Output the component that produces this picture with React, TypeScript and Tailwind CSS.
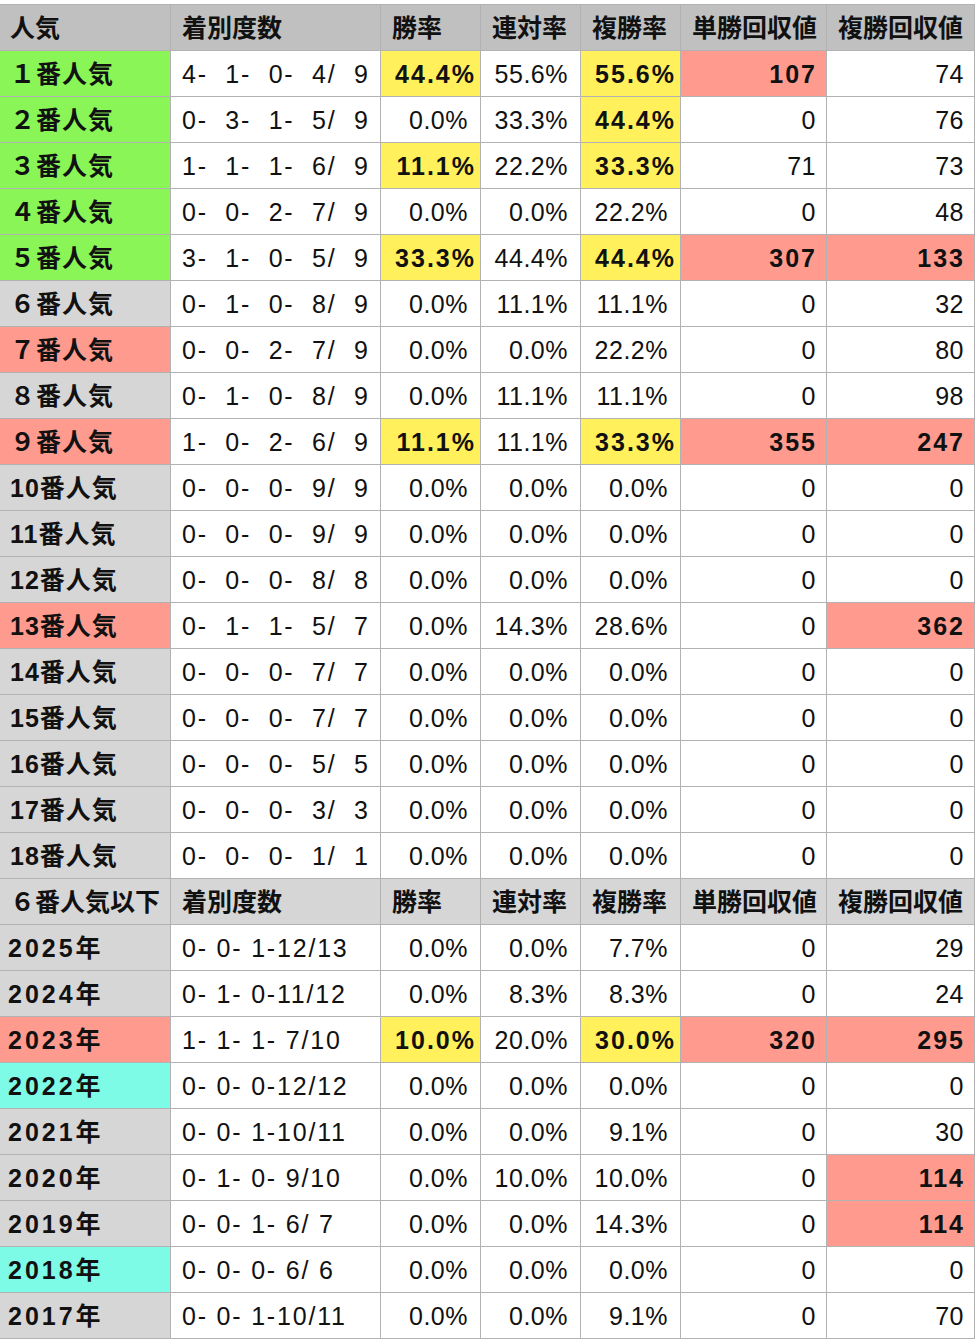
type Tone = "g" | "r" | "c" | "n";
type Row = [string, Tone, string, string, string, string, string, string];

const labelBg: Record<Tone, string> = {
  g: "bg-[#8af556]",
  r: "bg-[#fe9b8e]",
  c: "bg-[#7dfbe6]",
  n: "bg-[#d6d6d6]",
};

const HEAD = ["着別度数", "勝率", "連対率", "複勝率", "単勝回収値", "複勝回収値"];

// "*" prefix = highlighted (yellow for rates, red for returns)
const popular: Row[] = [
  ["１番人気", "g", "4-  1-  0-  4/  9", "*44.4%", "55.6%", "*55.6%", "*107", "74"],
  ["２番人気", "g", "0-  3-  1-  5/  9", "0.0%", "33.3%", "*44.4%", "0", "76"],
  ["３番人気", "g", "1-  1-  1-  6/  9", "*11.1%", "22.2%", "*33.3%", "71", "73"],
  ["４番人気", "g", "0-  0-  2-  7/  9", "0.0%", "0.0%", "22.2%", "0", "48"],
  ["５番人気", "g", "3-  1-  0-  5/  9", "*33.3%", "44.4%", "*44.4%", "*307", "*133"],
  ["６番人気", "n", "0-  1-  0-  8/  9", "0.0%", "11.1%", "11.1%", "0", "32"],
  ["７番人気", "r", "0-  0-  2-  7/  9", "0.0%", "0.0%", "22.2%", "0", "80"],
  ["８番人気", "n", "0-  1-  0-  8/  9", "0.0%", "11.1%", "11.1%", "0", "98"],
  ["９番人気", "r", "1-  0-  2-  6/  9", "*11.1%", "11.1%", "*33.3%", "*355", "*247"],
  ["10番人気", "n", "0-  0-  0-  9/  9", "0.0%", "0.0%", "0.0%", "0", "0"],
  ["11番人気", "n", "0-  0-  0-  9/  9", "0.0%", "0.0%", "0.0%", "0", "0"],
  ["12番人気", "n", "0-  0-  0-  8/  8", "0.0%", "0.0%", "0.0%", "0", "0"],
  ["13番人気", "r", "0-  1-  1-  5/  7", "0.0%", "14.3%", "28.6%", "0", "*362"],
  ["14番人気", "n", "0-  0-  0-  7/  7", "0.0%", "0.0%", "0.0%", "0", "0"],
  ["15番人気", "n", "0-  0-  0-  7/  7", "0.0%", "0.0%", "0.0%", "0", "0"],
  ["16番人気", "n", "0-  0-  0-  5/  5", "0.0%", "0.0%", "0.0%", "0", "0"],
  ["17番人気", "n", "0-  0-  0-  3/  3", "0.0%", "0.0%", "0.0%", "0", "0"],
  ["18番人気", "n", "0-  0-  0-  1/  1", "0.0%", "0.0%", "0.0%", "0", "0"],
];

const years: Row[] = [
  ["2025年", "n", "0- 0- 1-12/13", "0.0%", "0.0%", "7.7%", "0", "29"],
  ["2024年", "n", "0- 1- 0-11/12", "0.0%", "8.3%", "8.3%", "0", "24"],
  ["2023年", "r", "1- 1- 1- 7/10", "*10.0%", "20.0%", "*30.0%", "*320", "*295"],
  ["2022年", "c", "0- 0- 0-12/12", "0.0%", "0.0%", "0.0%", "0", "0"],
  ["2021年", "n", "0- 0- 1-10/11", "0.0%", "0.0%", "9.1%", "0", "30"],
  ["2020年", "n", "0- 1- 0- 9/10", "0.0%", "10.0%", "10.0%", "0", "*114"],
  ["2019年", "n", "0- 0- 1- 6/ 7", "0.0%", "0.0%", "14.3%", "0", "*114"],
  ["2018年", "c", "0- 0- 0- 6/ 6", "0.0%", "0.0%", "0.0%", "0", "0"],
  ["2017年", "n", "0- 0- 1-10/11", "0.0%", "0.0%", "9.1%", "0", "70"],
];

const cell = "h-[46px] pt-[3px] flex items-center border-r border-b border-[#b2b2b2]";

function Header({ first, bg }: { first: string; bg: string }) {
  return (
    <>
      <div className={`${cell} ${bg} pl-[10px] font-bold`}>{first}</div>
      {HEAD.map((h) => (
        <div key={h} className={`${cell} ${bg} pl-[11px] font-bold`}>
          {h}
        </div>
      ))}
    </>
  );
}

function Rate({ v }: { v: string }) {
  const hot = v.startsWith("*");
  return hot ? (
    <div className={`${cell} bg-[#fff05c] justify-end pr-[4px] font-bold tracking-[2px]`}>
      {v.slice(1)}
    </div>
  ) : (
    <div className={`${cell} bg-white justify-end pr-[12px] tracking-[0.5px]`}>{v}</div>
  );
}

function Ret({ v }: { v: string }) {
  const hot = v.startsWith("*");
  return hot ? (
    <div className={`${cell} bg-[#fe9b8e] justify-end pr-[9px] font-bold tracking-[2px]`}>
      {v.slice(1)}
    </div>
  ) : (
    <div className={`${cell} bg-white justify-end pr-[10px] tracking-[0.5px]`}>{v}</div>
  );
}

function DataRow({ r, year }: { r: Row; year?: boolean }) {
  const [label, tone, rec, win, ren, fuku, tan, fret] = r;
  return (
    <>
      <div
        className={`${cell} ${labelBg[tone]} font-bold ${
          year ? "pl-[8px] tracking-[3px]" : "pl-[10px] tracking-[1px]"
        }`}
      >
        {label}
      </div>
      <div className={`${cell} bg-white pl-[11px] whitespace-pre tracking-[1.8px]`}>{rec}</div>
      <Rate v={win} />
      <Rate v={ren} />
      <Rate v={fuku} />
      <Ret v={tan} />
      <Ret v={fret} />
    </>
  );
}

export default function App() {
  return (
    <div
      className="w-[978px] h-[1340px] bg-white overflow-hidden text-[25px] text-[#111]"
      style={{ fontFamily: '"Liberation Sans", "Noto Sans CJK JP", sans-serif' }}
    >
      <div className="mt-[4px] w-[975px] border-t border-[#b2b2b2] grid grid-cols-[171px_210px_100px_100px_100px_146px_148px]">
        <Header first="人気" bg="bg-[#c0c0c0]" />
        {popular.map((r) => (
          <DataRow key={r[0]} r={r} />
        ))}
        <Header first="６番人気以下" bg="bg-[#d6d6d6]" />
        {years.map((r) => (
          <DataRow key={r[0]} r={r} year />
        ))}
      </div>
    </div>
  );
}
